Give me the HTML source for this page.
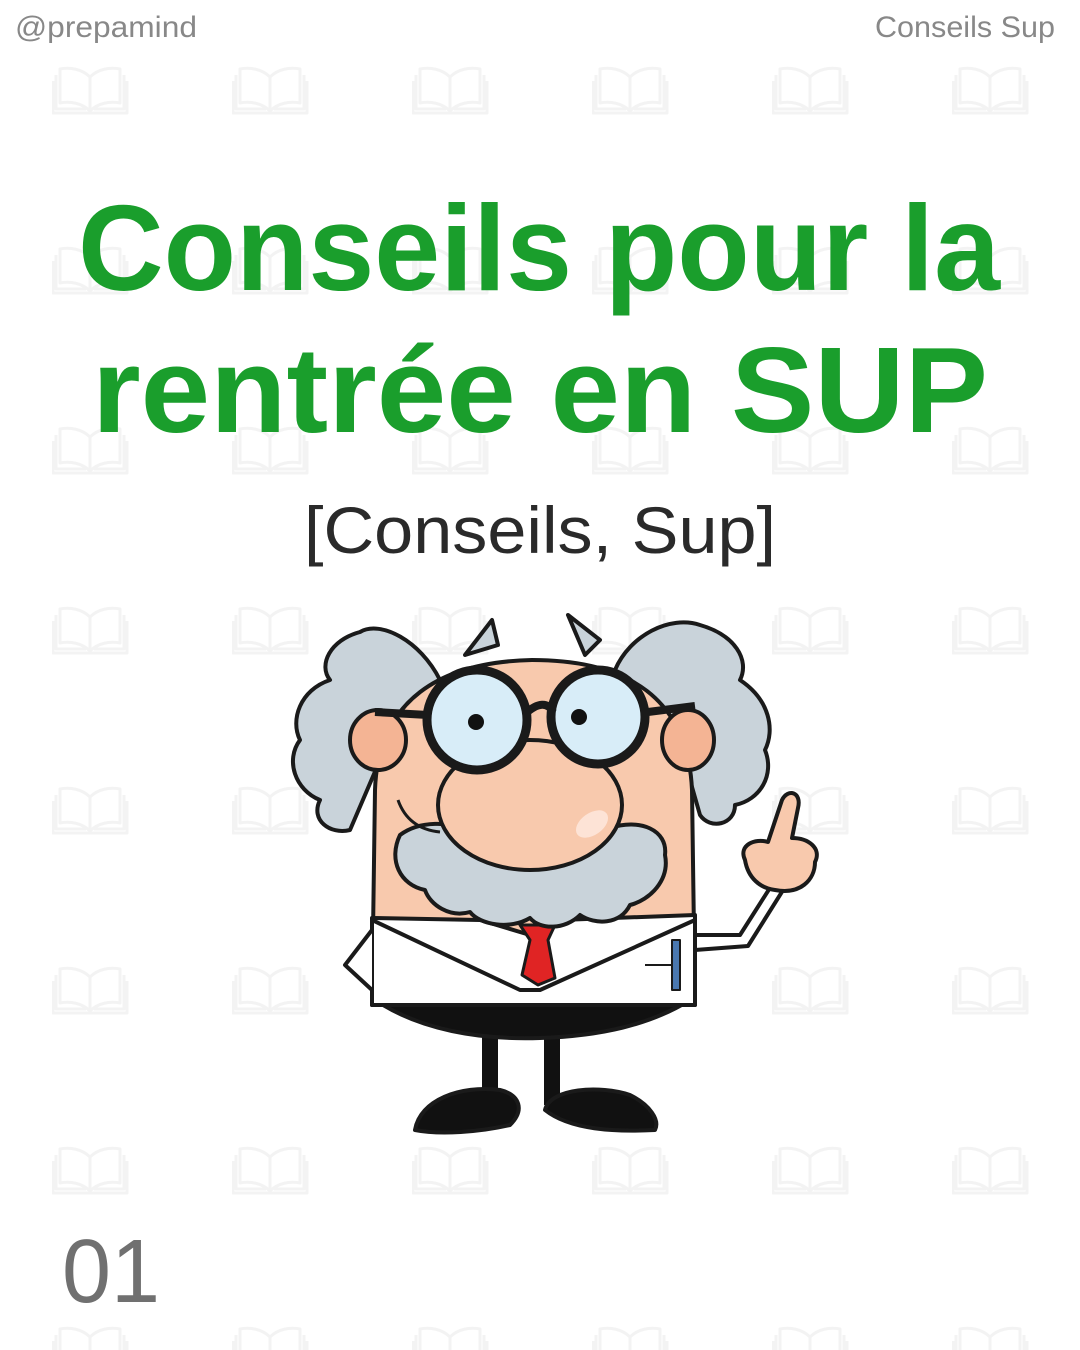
<!DOCTYPE html>
<html><head><meta charset="utf-8"><style>
html,body{margin:0;padding:0;background:#fff;}
body{width:1080px;height:1350px;overflow:hidden;position:relative;}
svg{position:absolute;left:0;top:0;}
</style></head><body>
<svg width="1080" height="1350" viewBox="0 0 1080 1350" xmlns="http://www.w3.org/2000/svg">
<defs>
<pattern id="bk" x="52" y="65" width="180" height="180" patternUnits="userSpaceOnUse">
<g fill="none" stroke="#f3f3f3" stroke-width="3" stroke-linejoin="round">
<path d="M38 46 C30 38 18 36 8 38 L8 4 C18 2 30 4 38 12 C46 4 58 2 68 4 L68 38 C58 36 46 38 38 46 Z"/>
<path d="M38 12 L38 46"/>
<path d="M4 10 L4 44 L34 44 M72 10 L72 44 L42 44"/>
<path d="M1 16 L1 48 L75 48 L75 16"/>
</g>
</pattern>
</defs>
<rect width="1080" height="1350" fill="url(#bk)"/>

<text x="15" y="37" font-family="Liberation Sans, sans-serif" font-size="30" fill="#888" textLength="182" lengthAdjust="spacingAndGlyphs">@prepamind</text>
<text x="875" y="37" font-family="Liberation Sans, sans-serif" font-size="30" fill="#888" textLength="180" lengthAdjust="spacingAndGlyphs">Conseils Sup</text>

<g font-family="Liberation Sans, sans-serif" font-weight="bold" fill="#1a9e2c" font-size="122">
<text x="78" y="290" textLength="922" lengthAdjust="spacingAndGlyphs">Conseils pour la</text>
<text x="92" y="432" textLength="896" lengthAdjust="spacingAndGlyphs">rentrée en SUP</text>
</g>
<text x="304" y="553" font-family="Liberation Sans, sans-serif" font-size="66" fill="#2a2a2a" textLength="472" lengthAdjust="spacingAndGlyphs">[Conseils, Sup]</text>

<text x="62" y="1302" font-family="Liberation Sans, sans-serif" font-size="90" fill="#707070" textLength="98" lengthAdjust="spacingAndGlyphs">01</text>

<!-- professor -->
<g stroke="#1a1a1a" stroke-width="4" stroke-linejoin="round">
<path d="M465 655 L492 620 L498 645 Z" fill="#c9d3da"/>
<path d="M568 615 L600 640 L585 655 Z" fill="#c9d3da"/>
<path d="M440 680 C420 640 380 620 360 632 C330 640 318 665 330 680 C300 690 290 720 300 740 C285 760 295 790 320 800 C310 820 330 835 350 830 L380 760 Z" fill="#c9d3da"/>
<path d="M615 670 C630 635 670 615 700 625 C735 635 750 660 740 680 C770 700 775 730 765 750 C775 775 760 800 735 805 C735 825 710 830 700 815 L680 745 Z" fill="#c9d3da"/>
<rect x="482" y="1010" width="16" height="95" fill="#111" stroke="none"/>
<rect x="544" y="1010" width="16" height="95" fill="#111" stroke="none"/>
<path d="M415 1130 C420 1100 460 1085 500 1090 C520 1095 525 1110 510 1125 C480 1132 440 1135 415 1130 Z" fill="#111"/>
<path d="M545 1110 C550 1088 600 1085 630 1095 C650 1105 660 1120 655 1130 C615 1132 570 1130 545 1110 Z" fill="#111"/>
<path d="M375 1000 C420 1030 480 1040 540 1038 C600 1036 650 1025 690 1000 Z" fill="#111"/>
<path d="M372 1005 L375 790 C378 700 440 662 532 660 C630 660 688 700 692 790 L695 1005 Z" fill="#f8c9ad"/>
<ellipse cx="378" cy="740" rx="28" ry="30" fill="#f4b494"/>
<ellipse cx="688" cy="740" rx="26" ry="30" fill="#f4b494"/>
<path d="M372 918 L480 920 L530 935 L560 920 L695 915 L695 1005 L372 1005 Z" fill="#fff"/>
<path d="M372 920 L520 990 L540 990 L695 920" fill="none"/>
<path d="M520 925 L555 925 L548 940 L555 978 L538 985 L522 975 L530 940 Z" fill="#e02424" stroke-width="3"/>
<path d="M672 940 L680 940 L680 990 L672 990 Z" fill="#4a78b0" stroke-width="2"/>
<path d="M645 965 L672 965" fill="none" stroke-width="2"/>
<path d="M372 930 L345 965 L372 990" fill="#fff"/>
<path d="M695 935 L740 935 L775 880 L785 887 L748 946 L695 950 Z" fill="#fff"/>
<path d="M745 860 C738 845 755 838 768 842 L782 800 C788 788 802 792 798 808 L792 838 C808 838 822 848 815 862 C815 880 800 895 775 890 C760 888 748 878 745 860 Z" fill="#f8c9ad"/>
<path d="M400 835 C420 820 450 822 470 830 C500 840 570 840 610 828 C640 818 668 830 665 855 C670 880 650 900 630 905 C620 925 595 925 580 915 C565 930 540 930 530 918 C510 930 480 925 470 912 C450 918 430 905 425 890 C400 885 388 860 400 835 Z" fill="#c9d3da"/>
<ellipse cx="530" cy="805" rx="92" ry="65" fill="#f8c9ad"/>
<ellipse cx="592" cy="824" rx="18" ry="11" fill="#fde3d6" stroke="none" transform="rotate(-35 592 824)"/>
<path d="M398 800 C405 820 420 830 440 832" fill="none" stroke-width="3"/>
<path d="M375 712 L428 715 M648 712 L695 706" stroke-width="8"/>
<circle cx="477" cy="720" r="50" fill="#d8edf8" stroke-width="9"/>
<circle cx="598" cy="717" r="47" fill="#d8edf8" stroke-width="9"/>
<path d="M525 714 C538 702 548 702 553 712" fill="none" stroke-width="8"/>
<circle cx="476" cy="722" r="8" fill="#111" stroke="none"/>
<circle cx="579" cy="717" r="8" fill="#111" stroke="none"/>
</g>
</svg>
</body></html>
